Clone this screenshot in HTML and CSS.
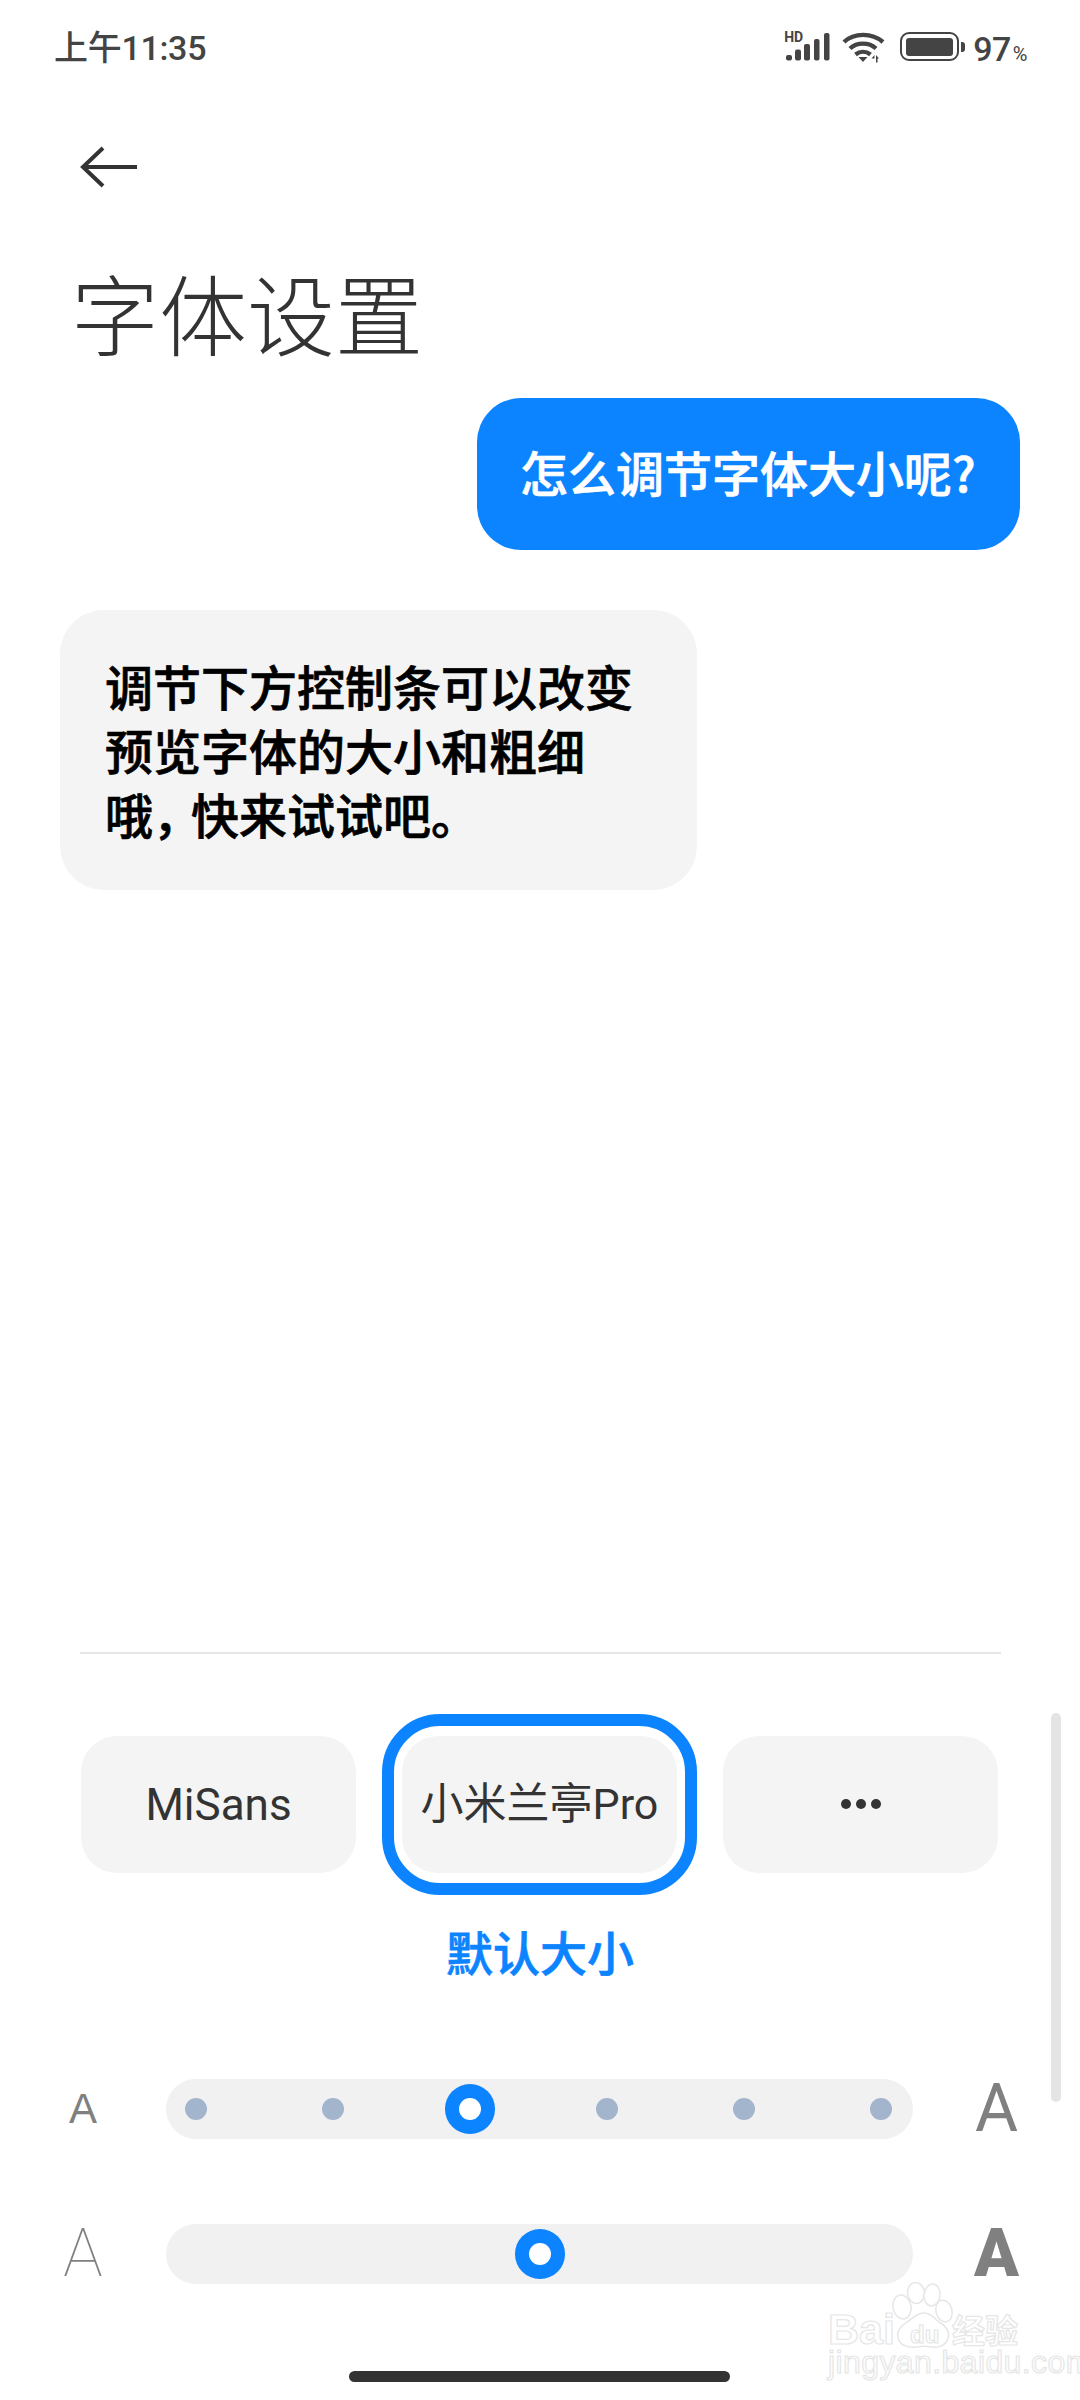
FILE: index.html
```html
<!DOCTYPE html>
<html lang="zh-CN">
<head>
<meta charset="utf-8">
<title>字体设置</title>
<link rel="stylesheet" href="styles.css">
</head>
<body>
<div class="page">
  <header class="status">
    <span class="time">上午11:35</span>
    <div class="status-icons">
      <div class="signal">
        <span class="hd">HD</span>
        <svg width="46" height="30" viewBox="0 0 46 30">
          <g fill="#444">
            <rect x="2" y="24" width="6" height="5.500" rx="2"/>
            <rect x="11" y="18.500" width="6" height="11" rx="2"/>
            <rect x="20" y="13" width="6" height="16.500" rx="2"/>
            <rect x="30" y="8" width="5.500" height="21.500" rx="2"/>
            <rect x="40" y="2" width="5.500" height="27.500" rx="2"/>
          </g>
        </svg>
      </div>
      <svg class="ic-wifi" width="43" height="32" viewBox="0 0 43 32">
        <g fill="none" stroke="#444" stroke-width="4.400">
          <path d="M2 11C12 1.500 30 1.500 41 11"/>
          <path d="M8 17.500C15 11 27 11 34 17.500"/>
          <path d="M13.500 23.500C18 20 24 20 28.500 23.500"/>
        </g>
        <path d="M16.500 26h9l-4.500 5z" fill="#444"/>
        <path d="M32.500 31.500v-4h-3l3-3.500zM34 24l3 3.500h-3zM34 27.500h1.500v4H34z" fill="#444"/>
      </svg>
      <div class="battery"><span class="battery-level"></span></div>
      <span class="battery-nub"></span>
      <span class="percent">97<small>%</small></span>
    </div>
  </header>

  <svg class="back" width="58" height="42" viewBox="0 0 58 42">
    <path d="M23 2L3 21l20 19M3 21h54" fill="none" stroke="#333" stroke-width="4"/>
  </svg>

  <h1 class="title">字体设置</h1>

  <section class="chat">
    <p class="bubble bubble-me">怎么调节字体大小呢?</p>
    <p class="bubble bubble-bot">调节下方控制条可以改变<br>预览字体的大小和粗细<br>哦<span class="comma">，</span>快来试试吧。</p>
  </section>

  <section class="controls">
    <hr class="divider">
    <div class="fonts">
      <div class="font-btn latin">MiSans</div>
      <div class="font-btn selected">小米兰亭Pro</div>
      <div class="font-btn more"><i></i><i></i><i></i></div>
    </div>
    <div class="size-label">默认大小</div>

    <div class="slider-row first">
      <span class="a a-small">A</span>
      <div class="track stops">
        <i class="stop"></i><i class="stop"></i><i class="stop on"></i><i class="stop"></i><i class="stop"></i><i class="stop"></i>
      </div>
      <span class="a a-large">A</span>
    </div>
    <div class="slider-row second">
      <span class="a a-thin">A</span>
      <div class="track centered"><i class="stop on"></i></div>
      <span class="a a-bold">A</span>
    </div>
    <div class="home-bar"></div>
  </section>

  <div class="scrollbar"></div>

  <div class="watermark">
    <svg class="paw" width="66" height="68" viewBox="0 0 66 68">
      <g fill="#fff" stroke="#e6e6e6" stroke-width="1.500">
        <ellipse cx="10" cy="25" rx="9" ry="12" transform="rotate(-12 10 25)"/>
        <ellipse cx="24" cy="11" rx="8.500" ry="10.500" transform="rotate(-6 24 11)"/>
        <ellipse cx="40" cy="13" rx="8" ry="11" transform="rotate(6 40 13)"/>
        <ellipse cx="52" cy="29" rx="8" ry="11" transform="rotate(-14 52 29)"/>
        <path d="M32 31c7 0 10 5 15 9 7 4 11 9 9 16-2 8-10 10-16 9-5-1-10-1-15 0-8 1-17-1-19-9-2-7 3-12 9-16 6-4 10-9 17-9z"/>
      </g>
    </svg>
    <span class="wm-bai">Bai</span>
    <span class="wm-du">du</span>
    <span class="wm-jy">经验</span>
    <span class="wm-url">jingyan.baidu.com</span>
  </div>
</div>
</body>
</html>
```
FILE: styles.css
```css
* { box-sizing: border-box; }
html, body { margin: 0; padding: 0; background: #fff; }
body { font-family: "Noto Sans CJK SC", Roboto, sans-serif; color: #333; }
.page { position: relative; width: 1080px; height: 2400px; overflow: hidden; display: flex; flex-direction: column; }

.status { height: 96px; padding: 26px 53px 0 54px; display: flex; justify-content: space-between; align-items: flex-start; color: #444; }
.time { font: 500 34px/44px Roboto, "Noto Sans CJK SC", sans-serif; letter-spacing: -.3px; }
.status-icons { display: flex; align-items: flex-start; margin-top: 5px; }
.signal { position: relative; width: 46px; height: 30px; }
.signal svg { display: block; }
.hd { position: absolute; left: 0; top: 1px; font: 700 14px/10px Roboto, sans-serif; color: #444; }
.ic-wifi { margin: 0 0 0 12px; }
.battery { width: 59px; height: 29px; margin: 1px 0 0 15px; border: 2.500px solid #444; border-radius: 9px; padding: 3.500px 4px; }
.battery-level { display: block; height: 100%; background: #444; border-radius: 3px; }
.battery-nub { width: 4px; height: 10px; margin: 11px 0 0 2px; background: #444; border-radius: 0 3px 3px 0; }
.percent { font: 500 34px/32px Roboto, sans-serif; margin: 2px 0 0 8px; letter-spacing: -.5px; }
.percent small { font-size: 20px; font-weight: 400; margin-left: 2px; }

.back { display: block; margin: 50px 0 0 80px; flex: none; }
.title { margin: 73px 0 0 71px; font: 300 88px/100px "Noto Sans CJK SC", sans-serif; color: #333; }

.chat { display: flex; flex-direction: column; margin-top: 37px; }
.bubble { margin: 0; font: 500 48px/64px "Noto Sans CJK SC", sans-serif; border-radius: 44px; -webkit-text-stroke: .7px currentColor; }
.bubble-me { align-self: flex-end; margin-right: 60px; padding: 41px 44.500px 47px 43px; background: #0d84ff; color: #fff; }
.bubble-bot { align-self: flex-start; margin: 60px 0 0 60px; width: 637px; padding: 43px 45px 45px; background: #f4f4f4; color: #000; }
.comma { letter-spacing: -10px; }

.controls { margin-top: auto; display: flex; flex-direction: column; padding-bottom: 18px; }
.divider { width: 921px; height: 2px; margin: 0 0 0 80px; border: 0; background: #e6e6e6; }
.fonts { display: flex; gap: 46px; margin: 82px 0 0 81px; }
.font-btn { position: relative; width: 275px; height: 137px; display: flex; align-items: center; justify-content: center; gap: 5px; background: #f4f4f4; border-radius: 36px; font: 400 43px/1 Roboto, "Noto Sans CJK SC", sans-serif; color: #333; }
.font-btn.latin { font-size: 44px; }
.font-btn.selected::after { content: ""; position: absolute; inset: -22px -20px; border: 12px solid #0d84ff; border-radius: 58px; }
.more i { width: 10px; height: 10px; background: #333; border-radius: 50%; margin-bottom: 2px; }
.size-label { margin-top: 46px; margin-bottom: 3px; text-align: center; font: 500 47px/64px "Noto Sans CJK SC", sans-serif; color: #0d84ff; -webkit-text-stroke: .7px currentColor; }

.slider-row { display: grid; grid-template-columns: 166px 747px 167px; align-items: center; }
.slider-row.first { margin-top: 93px; }
.slider-row.second { margin-top: 85px; }
.track { height: 60px; border-radius: 30px; background: #f1f1f1; display: flex; align-items: center; }
.stops { justify-content: space-between; padding: 0 21px 0 19px; }
.centered { justify-content: center; }
.stop { display: block; width: 22px; height: 22px; border-radius: 50%; background: #a3b4cd; }
.stop.on { background: #fff; box-shadow: 0 0 0 14px #0d84ff; }
.a { text-align: center; color: #808080; line-height: 60px; }
.a-small { font: 400 42px/60px "Liberation Sans", sans-serif; }
.a-large { font: 400 66px/60px Roboto, sans-serif; }
.a-thin { font: 100 66px/60px Roboto, sans-serif; }
.a-bold { font: 900 66px/60px Roboto, sans-serif; }
.home-bar { width: 381px; height: 11px; margin: 87px 0 0 349px; background: #333; border-radius: 6px; }

.scrollbar { position: absolute; left: 1051px; top: 1713px; width: 10px; height: 389px; background: #e4e4e4; border-radius: 5px; }

.watermark { position: absolute; left: 820px; top: 2270px; width: 210px; height: 110px; color: #fff; font-family: "Liberation Sans", sans-serif; }
.watermark span { position: absolute; -webkit-text-stroke: 1.200px #e6e6e6; white-space: nowrap; }
.paw { position: absolute; left: 72px; top: 12px; }
.wm-bai { left: 8px; top: 43px; font: 700 43px/32px "Liberation Sans", sans-serif; }
.wm-du { left: 90px; top: 56px; font: 700 24px/18px "Liberation Sans", sans-serif; }
.wm-jy { left: 132px; top: 43px; font: 700 33px/32px "Noto Sans CJK SC", sans-serif; }
.wm-url { left: 8px; top: 80px; font: 400 32px/24px "Liberation Sans", sans-serif; letter-spacing: .4px; }
```
